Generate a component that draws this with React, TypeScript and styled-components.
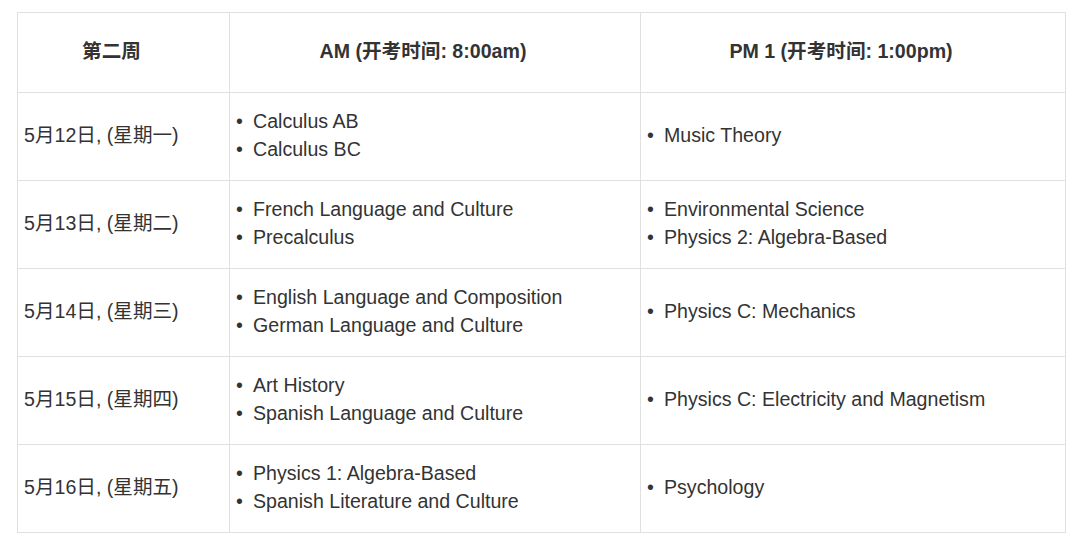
import React from "react";
import styled, { createGlobalStyle } from "styled-components";

const GlobalStyle = createGlobalStyle`
  body {
    margin: 0;
    background: #ffffff;
    font-family: "Liberation Sans", Arial, "Noto Sans CJK SC", sans-serif;
    color: #333333;
  }
`;

const Page = styled.div`
  padding: 12px 0 0 17px;
`;

const Table = styled.table`
  border-collapse: collapse;
  table-layout: fixed;
  width: 1048px;
  font-size: 19.6px;
  line-height: 28px;
`;

const HeadCell = styled.th<{ $width: number }>`
  box-sizing: border-box;
  width: ${(props) => props.$width}px;
  height: 80px;
  padding: 0 30px 4px 6px;
  border: 1px solid #e0e0e0;
  font-weight: bold;
  text-align: center;
  vertical-align: middle;
`;

const Cell = styled.td`
  box-sizing: border-box;
  height: 88px;
  padding: 0 6px 4px;
  border: 1px solid #e0e0e0;
  vertical-align: middle;
`;

const List = styled.ul`
  list-style: none;
  margin: 0;
  padding: 0;
`;

const Item = styled.li`
  display: flex;
`;

const Bullet = styled.span`
  flex: none;
  width: 17px;
`;

type Row = { day: string; am: string[]; pm: string[] };

const rows: Row[] = [
  { day: "5月12日, (星期一)", am: ["Calculus AB", "Calculus BC"], pm: ["Music Theory"] },
  {
    day: "5月13日, (星期二)",
    am: ["French Language and Culture", "Precalculus"],
    pm: ["Environmental Science", "Physics 2: Algebra-Based"],
  },
  {
    day: "5月14日, (星期三)",
    am: ["English Language and Composition", "German Language and Culture"],
    pm: ["Physics C: Mechanics"],
  },
  {
    day: "5月15日, (星期四)",
    am: ["Art History", "Spanish Language and Culture"],
    pm: ["Physics C: Electricity and Magnetism"],
  },
  {
    day: "5月16日, (星期五)",
    am: ["Physics 1: Algebra-Based", "Spanish Literature and Culture"],
    pm: ["Psychology"],
  },
];

const Exams = ({ items }: { items: string[] }) => (
  <List>
    {items.map((name) => (
      <Item key={name}>
        <Bullet>•</Bullet>
        <span>{name}</span>
      </Item>
    ))}
  </List>
);

export default function App() {
  return (
    <>
      <GlobalStyle />
      <Page>
        <Table>
          <thead>
            <tr>
              <HeadCell $width={212}>第二周</HeadCell>
              <HeadCell $width={411}>AM (开考时间: 8:00am)</HeadCell>
              <HeadCell $width={425}>PM 1 (开考时间: 1:00pm)</HeadCell>
            </tr>
          </thead>
          <tbody>
            {rows.map((row) => (
              <tr key={row.day}>
                <Cell>{row.day}</Cell>
                <Cell>
                  <Exams items={row.am} />
                </Cell>
                <Cell>
                  <Exams items={row.pm} />
                </Cell>
              </tr>
            ))}
          </tbody>
        </Table>
      </Page>
    </>
  );
}
